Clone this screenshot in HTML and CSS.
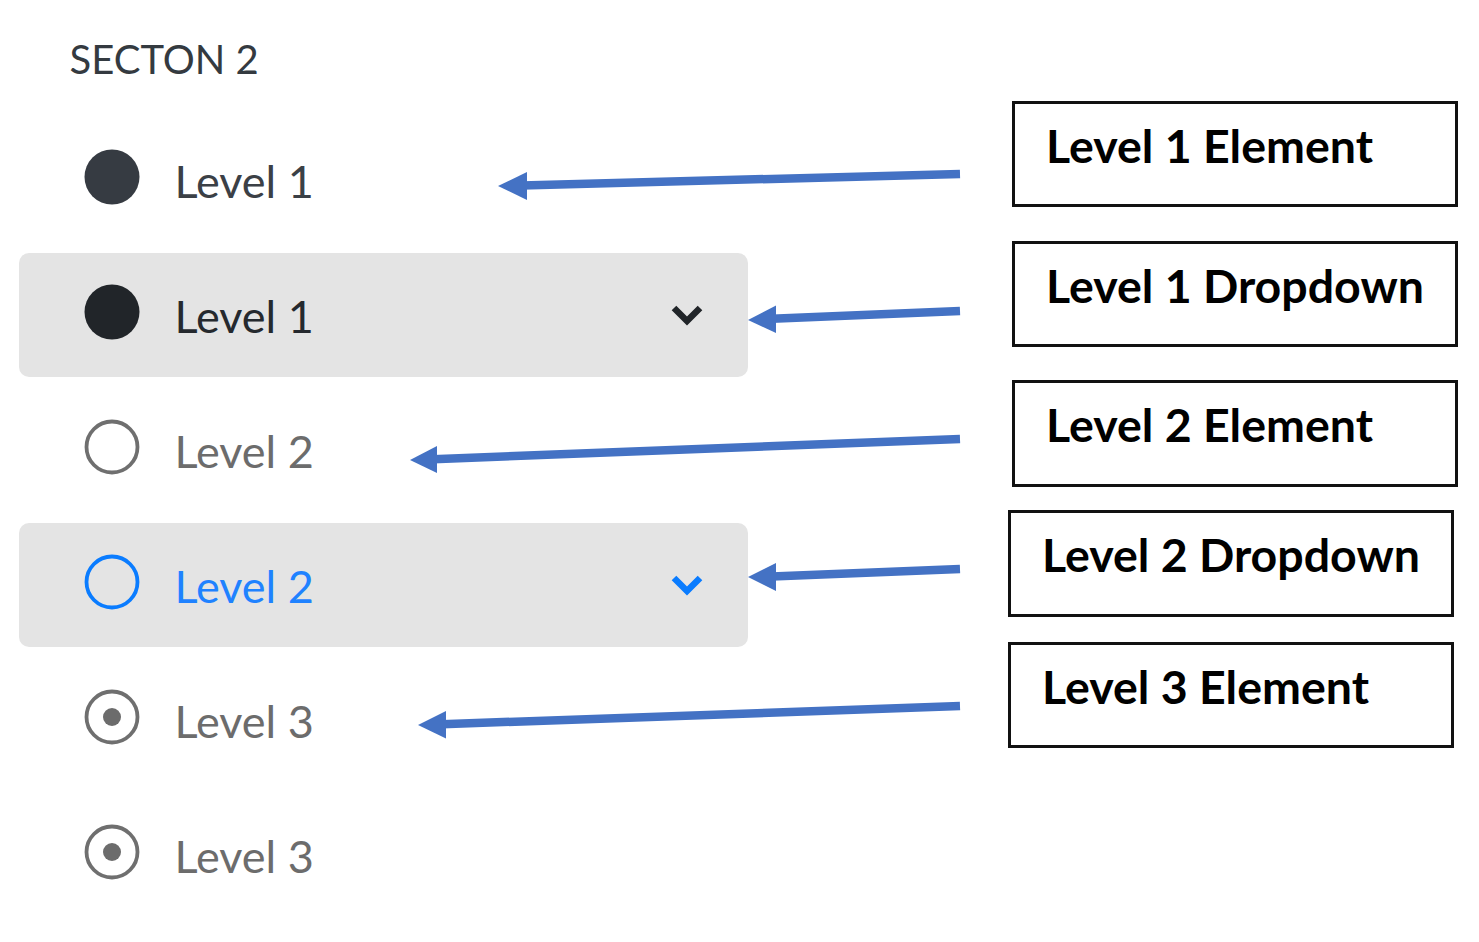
FILE: index.html
```html
<!DOCTYPE html>
<html lang="en">
<head>
<meta charset="utf-8">
<title>Section 2 levels</title>
<link rel="stylesheet" href="styles.css">
</head>
<body>
<div class="page">
  <div class="nav">
    <div class="section-title">SECTON 2</div>
    <ul class="menu">
      <li class="item lvl1">
        <svg class="icon" viewBox="0 0 56 56" width="56" height="56"><circle cx="28" cy="28" r="27.5" class="fill"/></svg>
        <span class="label">Level 1</span>
      </li>
      <li class="item lvl1-dd dropdown">
        <svg class="icon" viewBox="0 0 56 56" width="56" height="56"><circle cx="28" cy="28" r="27.5" class="fill"/></svg>
        <span class="label">Level 1</span>
        <svg class="chev" viewBox="0 0 34 22" width="34" height="22"><polyline points="4,4 17,17 30,4" class="chev-line"/></svg>
      </li>
      <li class="item lvl2">
        <svg class="icon" viewBox="0 0 56 56" width="56" height="56"><circle cx="28" cy="28" r="25.5" class="ring"/></svg>
        <span class="label">Level 2</span>
      </li>
      <li class="item lvl2-dd dropdown">
        <svg class="icon" viewBox="0 0 56 56" width="56" height="56"><circle cx="28" cy="28" r="25.5" class="ring"/></svg>
        <span class="label">Level 2</span>
        <svg class="chev" viewBox="0 0 34 22" width="34" height="22"><polyline points="4,4 17,17 30,4" class="chev-line"/></svg>
      </li>
      <li class="item lvl3">
        <svg class="icon" viewBox="0 0 56 56" width="56" height="56"><circle cx="28" cy="28" r="25.5" class="ring"/><circle cx="28" cy="28" r="9" class="dot"/></svg>
        <span class="label">Level 3</span>
      </li>
      <li class="item lvl3">
        <svg class="icon" viewBox="0 0 56 56" width="56" height="56"><circle cx="28" cy="28" r="25.5" class="ring"/><circle cx="28" cy="28" r="9" class="dot"/></svg>
        <span class="label">Level 3</span>
      </li>
    </ul>
  </div>

  <svg class="arrows" viewBox="0 0 1479 942" width="1479" height="942">
    <g class="arrow">
      <line x1="960" y1="174" x2="522" y2="185.4"/>
      <polygon points="498,186 527,172 527,200"/>
    </g>
    <g class="arrow">
      <line x1="960" y1="311" x2="772" y2="318.8"/>
      <polygon points="748,320 776,305.5 776,333"/>
    </g>
    <g class="arrow">
      <line x1="960" y1="439" x2="433" y2="459.2"/>
      <polygon points="410,460 437,446 437,473"/>
    </g>
    <g class="arrow">
      <line x1="960" y1="569" x2="772" y2="576.6"/>
      <polygon points="748,577 776,563 776,591"/>
    </g>
    <g class="arrow">
      <line x1="960" y1="706" x2="442" y2="724.2"/>
      <polygon points="418,725 446,711 446,738.5"/>
    </g>
  </svg>

  <div class="callouts">
    <div class="callout c1">Level 1 Element</div>
    <div class="callout c2">Level 1 Dropdown</div>
    <div class="callout c3">Level 2 Element</div>
    <div class="callout c4">Level 2 Dropdown</div>
    <div class="callout c5">Level 3 Element</div>
  </div>
</div>
</body>
</html>
```

FILE: styles.css
```css
html, body {
  margin: 0;
  padding: 0;
  background: #ffffff;
}

.page {
  position: relative;
  width: 1479px;
  height: 942px;
  overflow: hidden;
  font-family: Lato, "Open Sans", sans-serif;
}

.nav {
  display: flex;
  flex-direction: column;
  padding-top: 36.8px;
  padding-left: 19px;
  width: 729px;
}

.section-title {
  font-size: 40px;
  line-height: 44px;
  color: #343a40;
  padding-left: 50.5px;
}

.menu {
  list-style: none;
  margin: 37.2px 0 0 0;
  padding: 0;
  display: flex;
  flex-direction: column;
  gap: 11px;
}

.item {
  height: 124px;
  box-sizing: border-box;
  display: flex;
  align-items: center;
  padding-left: 65px;
  padding-right: 44px;
  border-radius: 10px;
}

.dropdown {
  background: #e4e4e4;
}

.icon {
  flex: none;
  margin-bottom: 5px;
}

.label {
  font-size: 45px;
  line-height: 45px;
  margin-left: 34.5px;
  padding-top: 4px;
}

.chev {
  margin-left: auto;
  flex: none;
}

.chev-line {
  fill: none;
  stroke-width: 6.5;
  stroke-linecap: butt;
  stroke-linejoin: miter;
}

.fill { stroke: none; }
.ring { fill: none; stroke-width: 3.8; }
.dot { stroke: none; }

.lvl1 .fill { fill: #363b42; }
.lvl1 .label { color: #3b4046; }

.lvl1-dd .fill { fill: #212529; }
.lvl1-dd .label { color: #25292e; }
.lvl1-dd .chev-line { stroke: #212529; }

.lvl2 .ring { stroke: #6f6f6f; }
.lvl2 .label { color: #6c6c6c; }

.lvl2-dd .ring { stroke: #0a7cff; }
.lvl2-dd .label { color: #1f82ff; }
.lvl2-dd .chev-line { stroke: #0a7cff; }

.lvl3 .ring { stroke: #6f6f6f; }
.lvl3 .dot { fill: #6c6c6c; }
.lvl3 .label { color: #6c6c6c; }

.arrows {
  position: absolute;
  left: 0;
  top: 0;
  pointer-events: none;
}

.arrow line {
  stroke: #4472c4;
  stroke-width: 8.5;
}

.arrow polygon {
  fill: #4472c4;
}

.callouts {
  position: absolute;
  left: 1008px;
  top: 101px;
  display: flex;
  flex-direction: column;
}

.callout {
  box-sizing: border-box;
  width: 446px;
  height: 106px;
  border: 3px solid #111111;
  background: #ffffff;
  padding: 17.5px 0 0 31px;
  font-size: 46.5px;
  line-height: 46.5px;
  font-weight: bold;
  color: #000000;
  white-space: nowrap;
  overflow: hidden;
}

.c1 { margin-left: 4px; }
.c2 { margin-left: 4px; margin-top: 34px; }
.c3 { margin-left: 4px; margin-top: 33px; height: 107px; }
.c4 { margin-top: 23px; height: 107px; }
.c5 { margin-top: 25px; }
```
